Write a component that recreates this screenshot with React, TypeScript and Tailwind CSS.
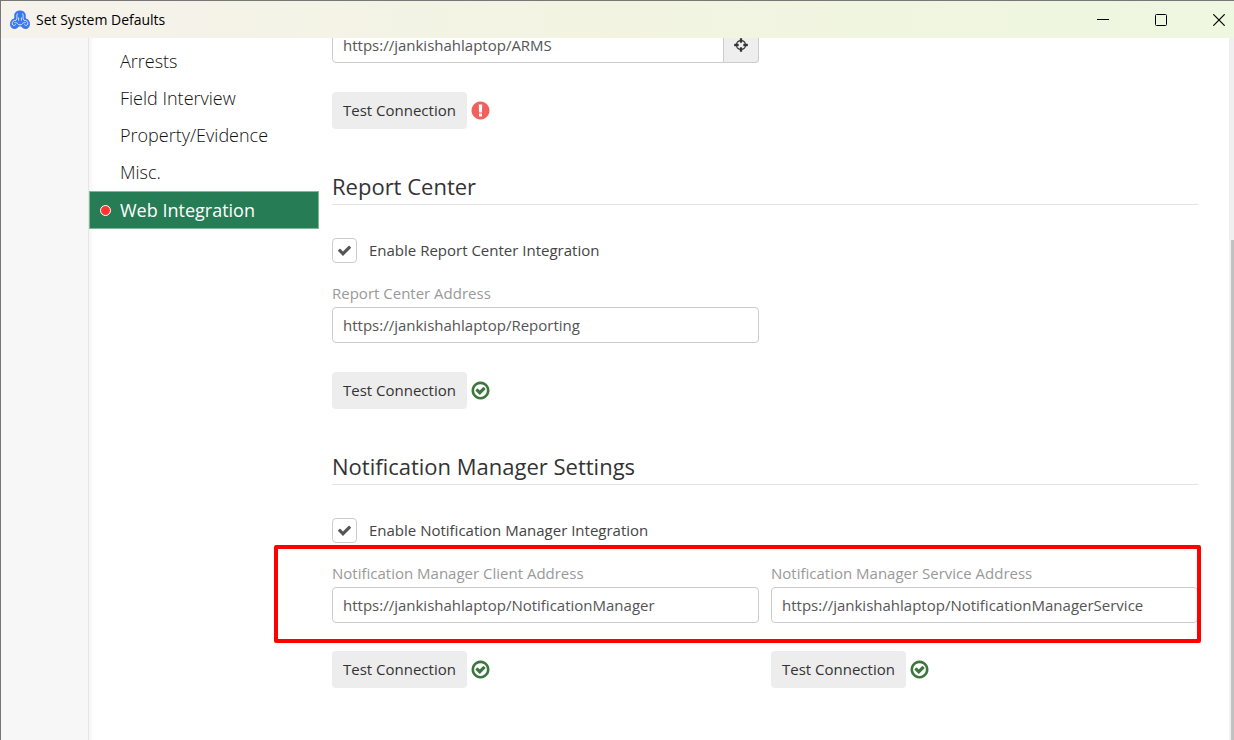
import { useId } from "react";

const CHECK =
  "M1671 566q0 40-28 68l-724 724-136 136q-28 28-68 28t-68-28l-136-136-362-362q-28-28-28-68t28-68l136-136q28-28 68-28t68 28l294 295 656-657q28-28 68-28t68 28l136 136q28 28 28 68z";
const CHECK_CIRCLE =
  "M1299 813l-422 422q-19 19-45 19t-45-19l-294-294q-19-19-19-45t19-45l102-102q19-19 45-19t45 19l147 147 275-275q19-19 45-19t45 19l102 102q19 19 19 45t-19 45zm141 83q0-148-73-273t-198-198-273-73-273 73-198 198-73 273 73 273 198 198 273 73 273-73 198-198 73-273zm224 0q0 209-103 385.5t-279.5 279.5-385.5 103-385.5-103-279.5-279.5-103-385.5 103-385.5 279.5-279.5 385.5-103 385.5 103 279.5 279.5 103 385.5z";
const EXCLAMATION_CIRCLE =
  "M896 128q209 0 385.5 103t279.5 279.5 103 385.5-103 385.5-279.5 279.5-385.5 103-385.5-103-279.5-279.5-103-385.5 103-385.5 279.5-279.5 385.5-103zm128 1247v-190q0-14-9-23.5t-22-9.5h-192q-13 0-23 10t-10 23v190q0 13 10 23t23 10h192q13 0 22-9.5t9-23.5zm-2-344l18-621q0-12-10-18-10-8-24-8h-220q-14 0-24 8-10 6-10 18l17 621q0 10 10 17.5t24 7.5h185q14 0 23.5-7.5t10.5-17.5z";
const CROSSHAIRS =
  "M1325 1024h-109q-26 0-45-19t-19-45v-128q0-26 19-45t45-19h109q-32-108-112.5-188.5t-188.5-112.5v109q0 26-19 45t-45 19h-128q-26 0-45-19t-19-45v-109q-108 32-188.5 112.5t-112.5 188.5h109q26 0 45 19t19 45v128q0 26-19 45t-45 19h-109q32 108 112.5 188.5t188.5 112.5v-109q0-26 19-45t45-19h128q26 0 45 19t19 45v109q108-32 188.5-112.5t112.5-188.5zm339-192v128q0 26-19 45t-45 19h-143q-37 161-154.5 278.5t-278.5 154.5v143q0 26-19 45t-45 19h-128q-26 0-45-19t-19-45v-143q-161-37-278.5-154.5t-154.5-278.5h-143q-26 0-45-19t-19-45v-128q0-26 19-45t45-19h143q37-161 154.5-278.5t278.5-154.5v-143q0-26 19-45t45-19h128q26 0 45 19t19 45v143q161 37 278.5 154.5t154.5 278.5h143q26 0 45 19t19 45z";

function Glyph({ d, className }: { d: string; className: string }) {
  return (
    <svg viewBox="0 0 1792 1792" fill="currentColor" aria-hidden="true" className={className}>
      <path d={d} />
    </svg>
  );
}

function Logo() {
  return (
    <svg viewBox="0 0 20 20" fill="none" aria-hidden="true" className="size-5 shrink-0">
      <path
        d="M10 .5c3.400 0 5.800 2.200 5.800 5.200 0 1.300-.3 2.100.3 2.900 2.400.6 3.900 2.700 3.900 5.300 0 2.900-2 5-4.600 5-1.900 0-3.300-.8-4.100-2.400h-2.600c-.8 1.600-2.200 2.400-4.100 2.400-2.600 0-4.600-2.100-4.600-5 0-2.600 1.500-4.700 3.900-5.300.6-.8.3-1.600.3-2.900 0-3 2.400-5.200 5.800-5.200z"
        fill="#3b78f0"
      />
      <g stroke="#e6ecf5" strokeWidth=".9" strokeLinecap="round">
        <path d="M7.200 3.800C5.900 5.500 8 8.600 6 10.300 3.500 10.200 1.900 11.900 2.200 14c.3 1.700 2.400 1.900 3.300.8" />
        <path d="M12.800 3.800c1.300 1.700-.8 4.800 1.200 6.500 2.500-.1 4.100 1.600 3.800 3.700-.3 1.700-2.400 1.900-3.300.8" />
        <path d="M4.800 12.600c1.500-.2 2.300.2 2.800 1.200.7 1.400 4.100 1.400 4.800 0 .5-1 1.300-1.400 2.800-1.200" />
        <path d="M8.600 8v2.200M11.400 8v2.200" />
      </g>
    </svg>
  );
}

function TitleBar() {
  return (
    <header className="flex h-[37px] shrink-0 items-center justify-between bg-linear-to-r from-[#f6f2ec] via-[#f2f4e1] to-[#eef7df] pr-[9px] pl-[9px]">
      <div className="flex items-center gap-1.5">
        <Logo />
        <h1 className="text-sm text-black">Set System Defaults</h1>
      </div>
      <div className="flex items-center gap-[46px] text-black">
        <button type="button" aria-label="Minimize" className="size-3">
          <svg viewBox="0 0 12 12" className="size-3" stroke="currentColor" fill="none">
            <path d="M0 5.500h12" />
          </svg>
        </button>
        <button type="button" aria-label="Maximize" className="size-3">
          <svg viewBox="0 0 12 12" className="size-3" stroke="currentColor" fill="none">
            <rect x=".5" y=".5" width="11" height="11" rx="1" />
          </svg>
        </button>
        <button type="button" aria-label="Close" className="size-3">
          <svg viewBox="0 0 12 12" className="size-3" stroke="currentColor" strokeWidth="1.200" fill="none">
            <path d="M.3.3l11.400 11.400M11.700.3.300 11.700" />
          </svg>
        </button>
      </div>
    </header>
  );
}

function NavItem({ label }: { label: string }) {
  return (
    <a href="#" className="flex h-[37px] items-center pl-[31px] text-lg font-light text-[#111]">
      {label}
    </a>
  );
}

function TestConnection({ ok }: { ok: boolean }) {
  return (
    <div className="flex items-center gap-[3px]">
      <button type="button" className="h-[37px] rounded bg-[#ededed] px-[11px] text-[#333]">
        Test Connection
      </button>
      {ok ? (
        <Glyph d={CHECK_CIRCLE} className="size-[21px] text-[#3c763d]" />
      ) : (
        <Glyph d={EXCLAMATION_CIRCLE} className="size-[21px] text-[#f0605d]" />
      )}
    </div>
  );
}

function Heading({ children }: { children: string }) {
  return (
    <h2 className="mt-[41px] h-[35px] border-b border-[#e3e3e3] text-[22px] leading-8 text-[#333]">
      {children}
    </h2>
  );
}

function EnableBox({ label }: { label: string }) {
  const id = useId();
  return (
    <div className="mt-[33px] flex h-[25px] items-center gap-3">
      <span className="grid size-[25px] place-items-center">
        <input
          id={id}
          type="checkbox"
          defaultChecked
          className="peer col-start-1 row-start-1 size-[25px] appearance-none rounded border border-[#ccc] bg-white"
        />
        <Glyph
          d={CHECK}
          className="pointer-events-none invisible col-start-1 row-start-1 size-[15px] text-[#555] peer-checked:visible"
        />
      </span>
      <label htmlFor={id} className="text-[#444]">
        {label}
      </label>
    </div>
  );
}

function AddressField({ label, value }: { label: string; value: string }) {
  const id = useId();
  return (
    <div className="flex flex-col gap-1">
      <label htmlFor={id} className="leading-5 text-[#999]">
        {label}
      </label>
      <input
        id={id}
        type="text"
        defaultValue={value}
        className="h-9 w-full rounded border border-[#ccc] bg-white px-2.5 text-[#555]"
      />
    </div>
  );
}

export default function App() {
  return (
    <div className="flex h-screen flex-col overflow-hidden border-t border-l border-[#777] bg-white font-['Open_Sans',sans-serif] text-[15px]">
      <TitleBar />
      <div className="flex min-h-0 grow overflow-hidden">
        <div className="w-[87px] shrink-0 bg-[#f7f7f7]" />
        <nav className="w-[231px] shrink-0 border-l border-[#e6e6e6] bg-linear-to-r from-[#f5f5f5] to-white to-[5px] pt-1">
          <NavItem label="Arrests" />
          <NavItem label="Field Interview" />
          <NavItem label="Property/Evidence" />
          <NavItem label="Misc." />
          <a
            href="#"
            className="mt-px flex h-[38px] items-center gap-[9px] border border-[#7fb899] bg-[#267c55] pl-2.5 text-lg text-white"
          >
            <span className="size-[11px] rounded-full border border-white bg-[#ff3535]" />
            Web Integration
          </a>
        </nav>
        <main className="min-w-0 grow pr-[31px] pl-[13px]">
          <div className="-mt-[11px] grid grid-cols-2 gap-3">
            <div className="flex">
              <input
                type="text"
                aria-label="ARMS Address"
                defaultValue="https://jankishahlaptop/ARMS"
                className="h-9 min-w-0 grow rounded-l border border-[#ccc] bg-white px-2.5 text-[#555]"
              />
              <button
                type="button"
                aria-label="Locate"
                className="flex h-9 w-[35px] items-center justify-center rounded-r border border-l-0 border-[#ccc] bg-[#eee] text-[#333]"
              >
                <Glyph d={CROSSHAIRS} className="size-4" />
              </button>
            </div>
          </div>
          <div className="mt-[29px]">
            <TestConnection ok={false} />
          </div>

          <Heading>Report Center</Heading>
          <EnableBox label="Enable Report Center Integration" />
          <div className="mt-5 grid grid-cols-2 gap-3">
            <AddressField label="Report Center Address" value="https://jankishahlaptop/Reporting" />
          </div>
          <div className="mt-[29px]">
            <TestConnection ok />
          </div>

          <Heading>Notification Manager Settings</Heading>
          <EnableBox label="Enable Notification Manager Integration" />
          <div className="relative mt-5 grid grid-cols-2 gap-3">
            <AddressField
              label="Notification Manager Client Address"
              value="https://jankishahlaptop/NotificationManager"
            />
            <AddressField
              label="Notification Manager Service Address"
              value="https://jankishahlaptop/NotificationManagerService"
            />
            <div className="pointer-events-none absolute -top-[18px] -right-[3px] -bottom-5 -left-[58px] rounded-xs border-4 border-[#ff0000]" />
          </div>
          <div className="mt-7 grid grid-cols-2 gap-3">
            <TestConnection ok />
            <TestConnection ok />
          </div>
        </main>
        <div className="flex w-[5px] shrink-0 flex-col items-end bg-[#f0f0f0] pt-[202px]">
          <div className="w-[3px] grow bg-[#c1c1c1]" />
        </div>
      </div>
    </div>
  );
}
